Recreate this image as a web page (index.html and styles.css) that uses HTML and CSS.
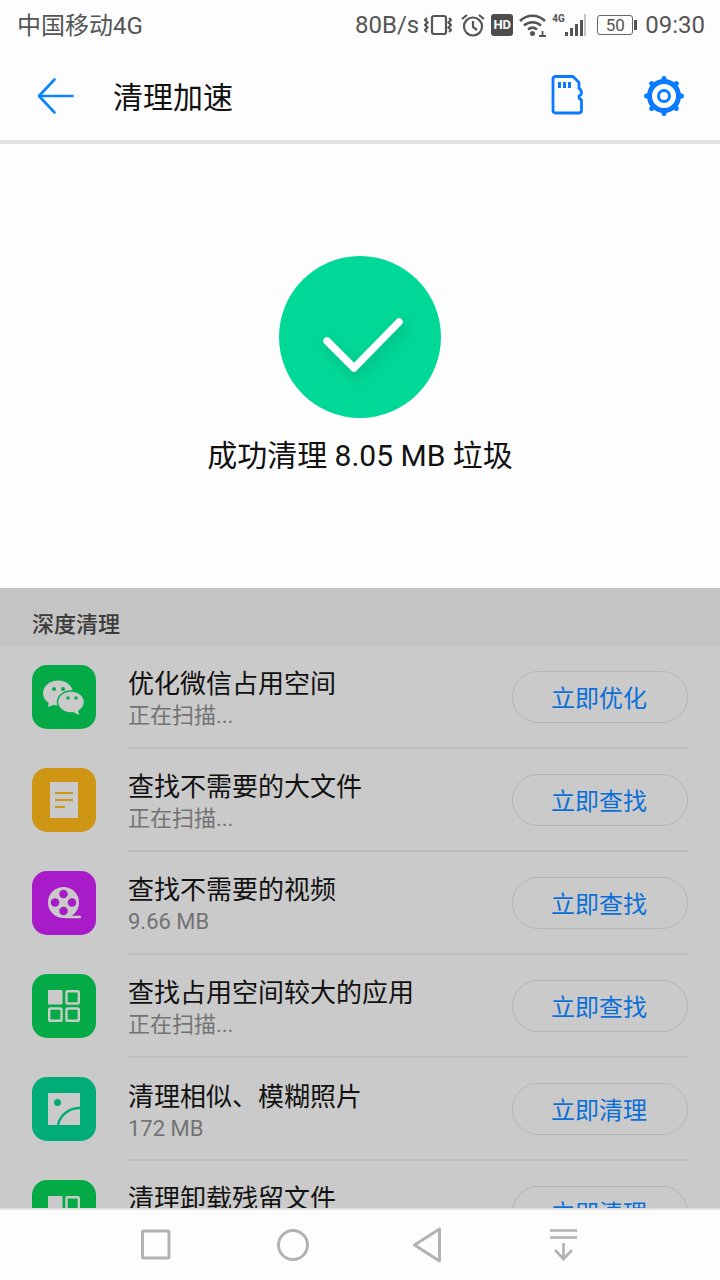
FILE: index.html
```html
<!DOCTYPE html>
<html lang="zh-CN">
<head>
    <meta charset="UTF-8">
    <meta name="viewport" content="width=device-width, initial-scale=1.0">
    <title>清理加速</title>
    <link rel="stylesheet" href="styles.css">
</head>
<body>
    <div class="status-bar">
        <span class="carrier">中国移动4G</span>
        <div class="status-right">
            <span class="speed">80B/s</span>
            <svg class="st-vibrate" width="28" height="24" viewBox="0 0 28 24" fill="none" stroke="#555" stroke-width="2.200">
                <rect x="8" y="3" width="14" height="18" rx="2"/>
                <path d="M4 5L2 7l2.500 2.500L2 12l2.500 2.500L2 17l2 2M26 5l2 2-2.500 2.500L28 12l-2.500 2.500L28 17l-2 2" transform="translate(-1 0)"/>
            </svg>
            <svg class="st-alarm" width="26" height="26" viewBox="0 0 26 26" fill="none" stroke="#555" stroke-width="2.200">
                <circle cx="13" cy="14.500" r="9"/>
                <path d="M13 9v6l4 3M2 7l5-4M24 7l-5-4"/>
            </svg>
            <span class="st-hd">HD</span>
            <svg class="st-wifi" width="28" height="24" viewBox="0 0 28 24" fill="none" stroke="#555" stroke-width="2.500">
                <path d="M1 8C8 1 19 1 26 8M5 12.500c5-4.500 12-4.500 17 0M9 16.500c3-2.500 6-2.500 9 0"/>
                <circle cx="13.500" cy="20.500" r="2.500" fill="#555" stroke="none"/>
                <path d="M20 23h7M23.500 18v6" stroke-width="1.800"/>
            </svg>
            <div class="st-signal">
                <span class="st-4g">4G</span>
                <svg width="24" height="24" viewBox="0 0 24 24">
                    <rect x="2" y="19" width="3" height="4" fill="#555"/>
                    <rect x="7" y="15" width="3" height="8" fill="#555"/>
                    <rect x="12" y="11" width="3" height="12" fill="#555"/>
                    <rect x="17" y="7" width="3" height="16" fill="#555"/>
                    <rect x="21" y="1" width="2" height="22" fill="#c4c4c4"/>
                </svg>
            </div>
            <div class="st-battery">
                <span class="st-battery-body">50</span>
                <span class="st-battery-tip"></span>
            </div>
            <span class="clock">09:30</span>
        </div>
    </div>

    <div class="toolbar">
        <svg class="back" width="40" height="40" viewBox="0 0 40 40" fill="none" stroke="#0a84ff" stroke-width="2.600" stroke-linecap="round" stroke-linejoin="round">
            <path d="M36.500 20H3M18.500 3.500L3 20l15.500 16.500"/>
        </svg>
        <span class="toolbar-title">清理加速</span>
        <svg class="sd" width="34" height="42" viewBox="0 0 34 42" fill="none" stroke="#0a7bff" stroke-width="2.800" stroke-linejoin="round">
            <path d="M3 4.500Q3 2.500 5.500 2.500H23l6 6v6q2.500 1.500 2.500 4t-2.500 3.500q-.5 2.500 2.500 4v10.500q0 2.500-3 2.500H5.500Q3 39 3 36.500z"/>
            <path d="M8 8h3v6H8zM13 8h3v6h-3zM18 8h3v6h-3z" fill="#0a7bff" stroke="none"/>
        </svg>
        <svg class="gear" width="42" height="42" viewBox="0 0 42 42" fill="none" stroke="#0a7bff">
            <circle cx="21" cy="21" r="14.500" stroke-width="5"/>
            <circle cx="21" cy="21" r="5.500" stroke-width="3"/>
            <g stroke-width="5" stroke-linecap="round">
                <path d="M21 3.500v2M21 36.500v2M3.500 21h2M36.500 21h2M8.600 8.600l1.500 1.500M31.900 31.900l1.500 1.500M33.400 8.600l-1.500 1.500M10.100 31.900l-1.500 1.500"/>
            </g>
        </svg>
    </div>

    <div class="hero">
        <div class="success-circle">
            <svg width="162" height="162" viewBox="0 0 162 162" fill="none" stroke-linecap="round" stroke-linejoin="round">
                <path d="M51 91l27 27 45-46" stroke="#00b583" stroke-opacity=".55" stroke-width="12" class="check-shadow"/>
                <path d="M48 85l27 27 45-46" stroke="#fff" stroke-width="7.500"/>
            </svg>
        </div>
        <p class="success-text">成功清理 8.05 MB 垃圾</p>
    </div>

    <div class="section-title">深度清理</div>

    <div class="clean-list">
        <div class="clean-row">
            <div class="app-icon wechat">
                <svg width="44" height="36" viewBox="0 -1 44 36">
                    <ellipse cx="16" cy="13" rx="15" ry="12.500" fill="#cacaca"/>
                    <path d="M7 21l-1 6 8-3z" fill="#cacaca"/>
                    <ellipse cx="29" cy="22" rx="13.500" ry="11" fill="#cacaca" stroke="#05ac48" stroke-width="1.500"/>
                    <path d="M36 30l1 5-6-3z" fill="#cacaca"/>
                    <circle cx="12" cy="9" r="2" fill="#05ac48"/>
                    <circle cx="21" cy="9" r="2" fill="#05ac48"/>
                    <circle cx="26" cy="18" r="1.700" fill="#05ac48"/>
                    <circle cx="34" cy="18" r="1.700" fill="#05ac48"/>
                </svg>
            </div>
            <div class="row-body">
                <div class="row-text">
                    <div class="row-title">优化微信占用空间</div>
                    <div class="row-sub">正在扫描...</div>
                </div>
                <button class="row-btn">立即优化</button>
            </div>
        </div>
        <div class="clean-row">
            <div class="app-icon files">
                <svg width="30" height="36" viewBox="0 0 30 36">
                    <rect x="1" y="0" width="28" height="36" rx="1" fill="#cacaca"/>
                    <path d="M6 11h18M6 18h18M6 25h10" stroke="#cf9515" stroke-width="2.200"/>
                </svg>
            </div>
            <div class="row-body">
                <div class="row-text">
                    <div class="row-title">查找不需要的大文件</div>
                    <div class="row-sub">正在扫描...</div>
                </div>
                <button class="row-btn">立即查找</button>
            </div>
        </div>
        <div class="clean-row">
            <div class="app-icon video">
                <svg width="34" height="32" viewBox="0 0 34 32">
                    <circle cx="16.500" cy="15.500" r="15.500" fill="#cacaca"/>
                    <path d="M18 30h15" stroke="#cacaca" stroke-width="2.400" stroke-linecap="round"/>
                    <circle cx="16.500" cy="7" r="4.300" fill="#a81bc8"/>
                    <circle cx="16.500" cy="24" r="4.300" fill="#a81bc8"/>
                    <circle cx="8" cy="15.500" r="4.300" fill="#a81bc8"/>
                    <circle cx="25" cy="15.500" r="4.300" fill="#a81bc8"/>
                </svg>
            </div>
            <div class="row-body">
                <div class="row-text">
                    <div class="row-title">查找不需要的视频</div>
                    <div class="row-sub">9.66 MB</div>
                </div>
                <button class="row-btn">立即查找</button>
            </div>
        </div>
        <div class="clean-row">
            <div class="app-icon apps">
                <svg width="32" height="32" viewBox="0 0 32 32">
                    <rect x="0" y="0" width="14.500" height="14.500" rx="1" fill="#cacaca"/>
                    <rect x="18.500" y="1.200" width="12.300" height="12.300" rx="1" fill="none" stroke="#cacaca" stroke-width="2.400"/>
                    <rect x="1.200" y="18.500" width="12.300" height="12.300" rx="1" fill="none" stroke="#cacaca" stroke-width="2.400"/>
                    <rect x="18.500" y="18.500" width="12.300" height="12.300" rx="1" fill="none" stroke="#cacaca" stroke-width="2.400"/>
                </svg>
            </div>
            <div class="row-body">
                <div class="row-text">
                    <div class="row-title">查找占用空间较大的应用</div>
                    <div class="row-sub">正在扫描...</div>
                </div>
                <button class="row-btn">立即查找</button>
            </div>
        </div>
        <div class="clean-row">
            <div class="app-icon photos">
                <svg width="32" height="32" viewBox="0 0 32 32">
                    <rect width="32" height="32" rx="1" fill="#cacaca"/>
                    <circle cx="9.500" cy="9.500" r="3.500" fill="#00ad78"/>
                    <path d="M10 32C12 22 21 15 32 15" fill="none" stroke="#00ad78" stroke-width="2.400"/>
                </svg>
            </div>
            <div class="row-body">
                <div class="row-text">
                    <div class="row-title">清理相似<span class="tc-mark">、</span>模糊照片</div>
                    <div class="row-sub">172 MB</div>
                </div>
                <button class="row-btn">立即清理</button>
            </div>
        </div>
        <div class="clean-row">
            <div class="app-icon apps">
                <svg width="32" height="32" viewBox="0 0 32 32">
                    <rect x="0" y="0" width="14.500" height="14.500" rx="1" fill="#cacaca"/>
                    <rect x="18.500" y="1.200" width="12.300" height="12.300" rx="1" fill="none" stroke="#cacaca" stroke-width="2.400"/>
                    <rect x="1.200" y="18.500" width="12.300" height="12.300" rx="1" fill="none" stroke="#cacaca" stroke-width="2.400"/>
                    <rect x="18.500" y="18.500" width="12.300" height="12.300" rx="1" fill="none" stroke="#cacaca" stroke-width="2.400"/>
                </svg>
            </div>
            <div class="row-body">
                <div class="row-text">
                    <div class="row-title">清理卸载残留文件</div>
                    <div class="row-sub">正在扫描...</div>
                </div>
                <button class="row-btn">立即清理</button>
            </div>
        </div>
    </div>

    <div class="nav-bar">
        <svg width="32" height="32" viewBox="0 0 32 32" fill="none" stroke="#b2b2b2" stroke-width="3" stroke-linejoin="round">
            <rect x="2.500" y="2" width="26.500" height="27" rx="1"/>
        </svg>
        <svg width="34" height="34" viewBox="0 0 34 34" fill="none" stroke="#b2b2b2" stroke-width="3">
            <circle cx="17" cy="17" r="14.500"/>
        </svg>
        <svg width="32" height="36" viewBox="0 0 32 36" fill="none" stroke="#b2b2b2" stroke-width="3" stroke-linejoin="round">
            <path d="M26.500 2v32L1.500 18z"/>
        </svg>
        <svg width="30" height="36" viewBox="0 0 30 36" fill="none" stroke="#b2b2b2" stroke-width="2.600">
            <path d="M1 3.500h27M1 10.500h27M14.500 16v15M6 23l8.500 9L23 23"/>
        </svg>
    </div>
</body>
</html>
```

FILE: styles.css
```css
* {
    box-sizing: border-box;
}
html, body {
    margin: 0;
    height: 1280px;
    overflow: hidden;
}
body {
    display: flex;
    flex-direction: column;
    background: #fdfdfd;
    font-family: Roboto, "Noto Sans CJK SC", sans-serif;
}

/* status bar */
.status-bar {
    height: 48px;
    padding: 0 15px 0 17px;
    display: flex;
    align-items: center;
    justify-content: space-between;
    color: #555;
    font-size: 24px;
}
.carrier {
    margin-top: -2px;
}
.status-right {
    padding-top: 2px;
    display: flex;
    align-items: center;
}
.st-vibrate {
    margin-left: 5px;
}
.st-alarm {
    margin-left: 8px;
}
.st-hd {
    width: 22px;
    height: 22px;
    margin-left: 5px;
    border-radius: 3px;
    background: #4d4d4d;
    color: #fdfdfd;
    font-size: 13px;
    font-weight: 700;
    line-height: 22px;
    text-align: center;
}
.st-wifi {
    margin-left: 6px;
}
.st-signal {
    position: relative;
    width: 36px;
    height: 24px;
    margin-left: 4px;
    display: flex;
    justify-content: flex-end;
}
.st-4g {
    position: absolute;
    left: 1px;
    top: 0;
    font-size: 10px;
    font-weight: 700;
    line-height: 11px;
}
.st-battery {
    margin-left: 10px;
    display: flex;
    align-items: center;
}
.st-battery-body {
    width: 36px;
    height: 20px;
    border: 1px solid #666;
    border-radius: 3px;
    font-size: 17px;
    line-height: 18px;
    text-align: center;
}
.st-battery-tip {
    width: 3px;
    height: 10px;
    margin-left: 1px;
    background: #555;
}
.clock {
    margin-left: 8px;
}

/* toolbar */
.toolbar {
    height: 96px;
    padding: 4px 35px 0 36px;
    display: flex;
    align-items: center;
    border-bottom: 4px solid #e0e0e0;
}
.back {
    flex: none;
}
.toolbar-title {
    flex: 1;
    margin: -2px 0 0 37px;
    font-size: 30px;
    color: #111;
}
.sd {
    margin: -2px 59px 0 0;
}

/* result area */
.hero {
    height: 444px;
    padding-top: 112px;
    display: flex;
    flex-direction: column;
    align-items: center;
}
.success-circle {
    width: 162px;
    height: 162px;
    border-radius: 50%;
    background: #00d897;
}
.check-shadow {
    filter: blur(6px);
}
.success-text {
    margin: 17px 0 0;
    font-size: 30px;
    line-height: 42px;
    color: #111;
}

/* list */
.section-title {
    height: 58px;
    padding: 23px 0 0 32px;
    background: #c4c4c4;
    color: #3c3c3c;
    font-size: 22px;
    font-weight: 500;
    line-height: 28px;
}
.clean-list {
    flex: 1;
    min-height: 0;
    overflow: hidden;
    background: #cacaca;
    padding-left: 32px;
}
.clean-row {
    height: 103px;
    display: flex;
}
.app-icon {
    flex: none;
    width: 64px;
    height: 64px;
    margin-top: 19px;
    border-radius: 15px;
    display: flex;
    align-items: center;
    justify-content: center;
}
.wechat, .apps {
    background: #03aa45;
}
.files {
    background: #cf9515;
}
.video {
    background: #a81bc8;
}
.photos {
    background: #00ad78;
}
.row-body {
    flex: 1;
    margin: 0 32px 0 32px;
    display: flex;
    align-items: center;
    justify-content: space-between;
    border-bottom: 2px solid #bdbdbd;
}
.row-text {
    padding-top: 4px;
}
.row-title {
    font-size: 26px;
    line-height: 36px;
    color: #111;
}
.tc-mark {
    font-family: "Noto Sans CJK TC", sans-serif;
}
.row-sub {
    margin: -1px 0 1px;
    font-size: 22px;
    line-height: 30px;
    color: #737373;
}
.row-btn {
    width: 176px;
    height: 52px;
    padding: 0 2px 0 0;
    border: 1px solid #b6b6b6;
    border-radius: 26px;
    background: transparent;
    color: #0a6fd8;
    font-family: inherit;
    font-size: 24px;
}

/* bottom nav */
.nav-bar {
    height: 72px;
    flex: none;
    padding: 0 141px 0 140px;
    display: flex;
    align-items: center;
    justify-content: space-between;
    background: #fdfdfd;
    border-top: 2px solid #e0e0e0;
}
```
